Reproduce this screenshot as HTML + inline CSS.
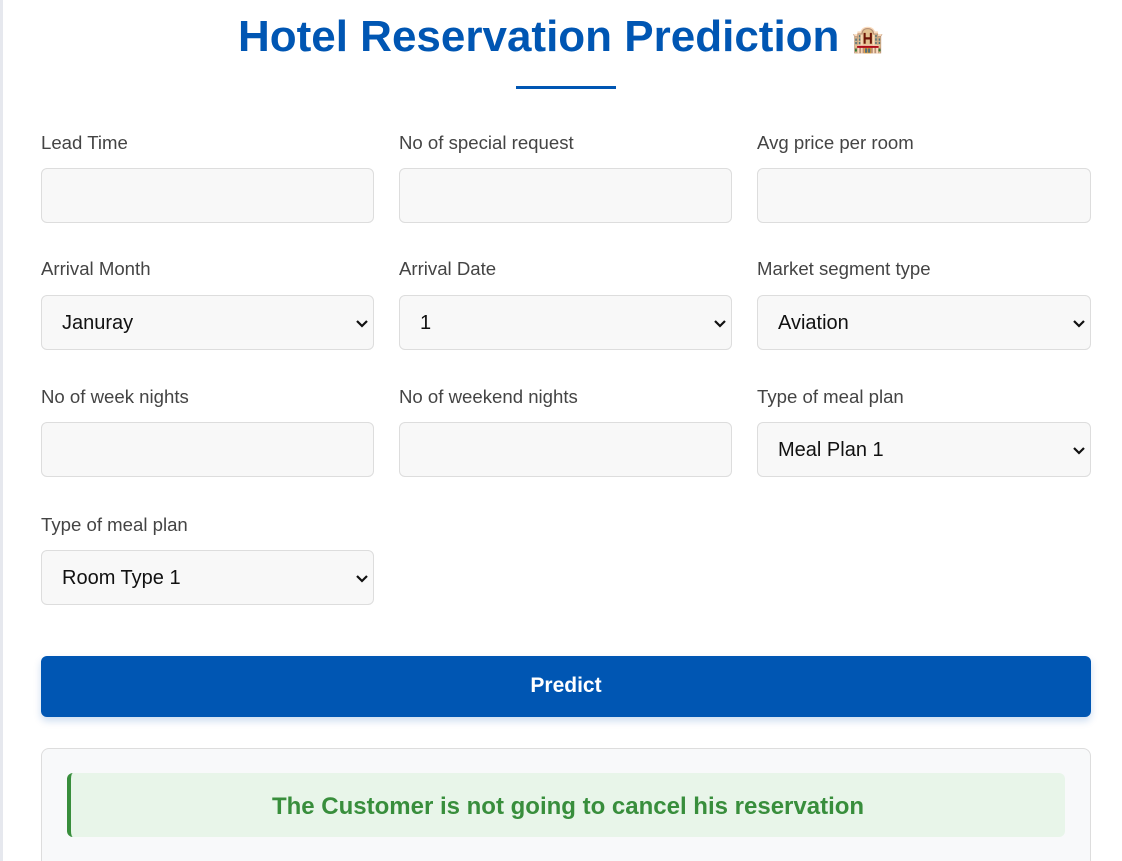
<!DOCTYPE html>
<html style="overflow:hidden;height:861px"><head><style>
body{margin:0;width:1122px;height:861px;overflow:hidden;background:#fff;font-family:"Liberation Sans",Arial,sans-serif;position:relative}
.strip{position:absolute;left:0;top:0;width:3px;height:861px;background:#e6e8ee}
h1{position:absolute;left:0;width:1122px;top:12px;margin:0;text-align:center;font-size:44px;font-weight:bold;color:#0056b3;line-height:50px}
.ul{position:absolute;left:516px;top:86px;width:100px;height:3px;background:#0056b3}
.lb{position:absolute;font-size:18.6px;color:#444;line-height:20px}
.in{position:absolute;width:331px;height:53px;border:1px solid #ddd;border-radius:6px;background:#f8f8f8}
.in span{position:absolute;left:20px;top:16px;font-size:20px;color:#111}
.in svg{position:absolute;right:3px;top:22px}
.btn{position:absolute;left:41px;top:656px;width:1050px;height:61px;background:#0056b3;border-radius:6px;box-shadow:0 4px 8px rgba(0,86,179,.2);color:#fff;font-weight:bold;font-size:21px;text-align:center;line-height:60px}
.res{position:absolute;left:41px;top:748px;width:1048px;height:130px;border:1px solid #ddd;border-radius:8px;background:#f8f9fa}
.msg{position:absolute;left:67px;top:773px;width:994px;height:64px;background:#e8f5e9;border-left:4px solid #388e3c;border-radius:6px;color:#388e3c;font-weight:bold;font-size:24px;text-align:center;line-height:67px}
</style></head><body>
<div class="strip"></div>
<h1>Hotel Reservation Prediction <span style="font-size:26px;vertical-align:3px">🏨</span></h1>
<div class="ul"></div>

<div class="lb" style="left:41px;top:133px">Lead Time</div>
<div class="lb" style="left:399px;top:133px">No of special request</div>
<div class="lb" style="left:757px;top:133px">Avg price per room</div>
<div class="in" style="left:41px;top:168px"></div>
<div class="in" style="left:399px;top:168px"></div>
<div class="in" style="left:757px;top:168px;width:332px"></div>

<div class="lb" style="left:41px;top:259px">Arrival Month</div>
<div class="lb" style="left:399px;top:259px">Arrival Date</div>
<div class="lb" style="left:757px;top:259px">Market segment type</div>
<div class="in" style="left:41px;top:295px"><span>Januray</span><svg width="16" height="12" viewBox="0 0 16 12"><path d="M3 3l5 5 5-5" stroke="#111" stroke-width="2.2" fill="none"/></svg></div>
<div class="in" style="left:399px;top:295px"><span>1</span><svg width="16" height="12" viewBox="0 0 16 12"><path d="M3 3l5 5 5-5" stroke="#111" stroke-width="2.2" fill="none"/></svg></div>
<div class="in" style="left:757px;top:295px;width:332px"><span>Aviation</span><svg width="16" height="12" viewBox="0 0 16 12"><path d="M3 3l5 5 5-5" stroke="#111" stroke-width="2.2" fill="none"/></svg></div>

<div class="lb" style="left:41px;top:387px">No of week nights</div>
<div class="lb" style="left:399px;top:387px">No of weekend nights</div>
<div class="lb" style="left:757px;top:387px">Type of meal plan</div>
<div class="in" style="left:41px;top:422px"></div>
<div class="in" style="left:399px;top:422px"></div>
<div class="in" style="left:757px;top:422px;width:332px"><span>Meal Plan 1</span><svg width="16" height="12" viewBox="0 0 16 12"><path d="M3 3l5 5 5-5" stroke="#111" stroke-width="2.2" fill="none"/></svg></div>

<div class="lb" style="left:41px;top:515px">Type of meal plan</div>
<div class="in" style="left:41px;top:550px"><span>Room Type 1</span><svg width="16" height="12" viewBox="0 0 16 12"><path d="M3 3l5 5 5-5" stroke="#111" stroke-width="2.2" fill="none"/></svg></div>

<div class="btn">Predict</div>
<div class="res"></div>
<div class="msg">The Customer is not going to cancel his reservation</div>
</body></html>
